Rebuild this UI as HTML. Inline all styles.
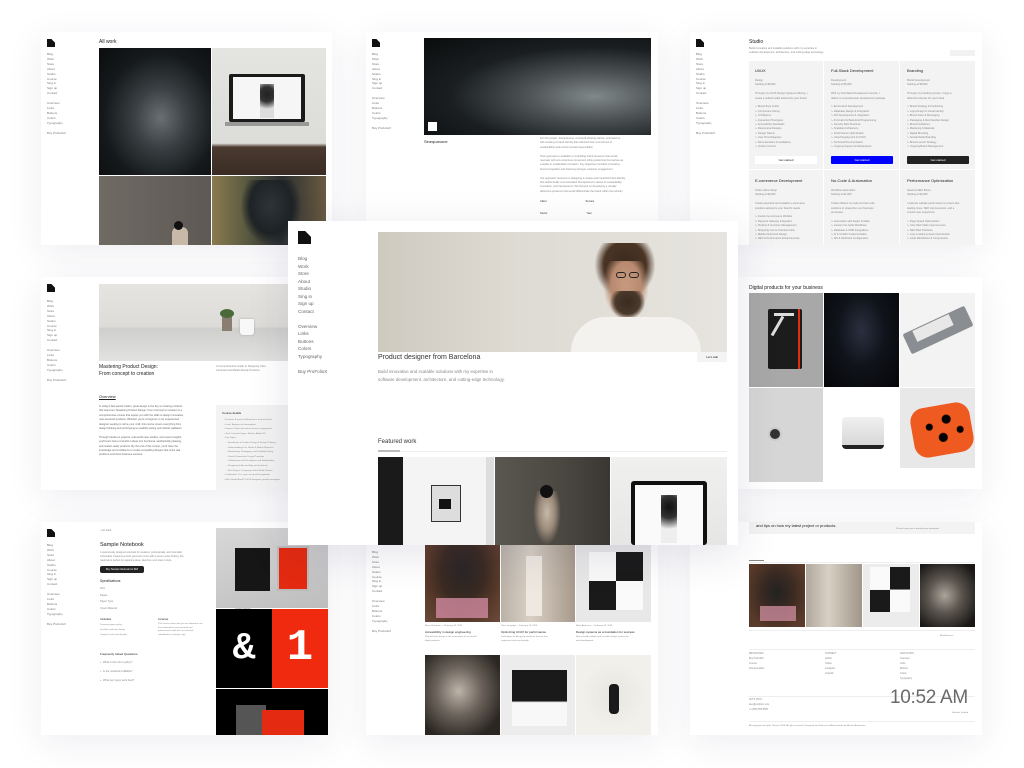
<!DOCTYPE html>
<html><head><meta charset="utf-8"><style>
*{margin:0;padding:0;box-sizing:border-box}
body{width:1024px;height:768px;background:#fff;position:relative;overflow:hidden;font-family:"Liberation Sans",sans-serif;color:#222}
.c{position:absolute;background:#fff;box-shadow:0 8px 34px rgba(40,40,90,.08);overflow:hidden}
.a{position:absolute}
.logo{position:absolute;background:#111;clip-path:polygon(0 0,55% 0,100% 45%,100% 100%,0 100%)}
.nav{position:absolute;font-size:3px;line-height:4.9px;color:#777;white-space:pre}
.t{position:absolute;white-space:pre;color:#888;font-size:2.6px;line-height:4.4px}
.h{position:absolute;white-space:nowrap;color:#222}
.g{position:absolute;background:#f3f3f3}
</style></head><body>

<!-- top-left: All work -->
<div class="c" style="left:41px;top:32px;width:291px;height:213px">
<div class="logo" style="left:6px;top:7px;width:8px;height:8px"></div>
<div class="nav" style="left:6px;top:20px">Blog
Work
Store
About
Studio
Course
Sing in
Sign up
Contact

Overview
Links
Buttons
Colors
Typography

Buy ProFolioX</div>
<div class="h" style="left:58px;top:7px;font-size:5px">All work</div>
<div class="a" style="left:58px;top:16px;width:112px;height:127px;background:radial-gradient(ellipse at 55% 55%,#6a7072 0,#3a4043 30%,#15191b 65%,#0b0d0e 100%)"></div>
<div class="a" style="left:171px;top:16px;width:114px;height:127px;background:linear-gradient(#e4e4e0 0,#dcdcd8 75%,#4a3a30 78%,#3a2c24 100%)"></div>
<div class="a" style="left:188px;top:42px;width:76px;height:48px;background:#1a1a1a;border-radius:2px"></div>
<div class="a" style="left:192px;top:45px;width:68px;height:42px;background:#f6f6f6"></div>
<div class="a" style="left:219px;top:52px;width:14px;height:34px;background:radial-gradient(circle at 50% 30%,#222 0,#333 30%,#ddd 60%)"></div>
<div class="a" style="left:184px;top:90px;width:84px;height:4px;background:#999"></div>
<div class="a" style="left:58px;top:144px;width:112px;height:69px;background:linear-gradient(90deg,#6f6a64,#5e5954)"></div>
<div class="a" style="left:131px;top:195px;width:16px;height:18px;background:#c8b8a8;border-radius:6px 6px 0 0"></div>
<div class="a" style="left:133px;top:189px;width:9px;height:9px;background:#111;border-radius:50%"></div>
<div class="a" style="left:171px;top:144px;width:114px;height:69px;background:linear-gradient(90deg,#8a7a50,#5a5a40 30%,#2a2e30 60%,#6a5a40)"></div>
<div class="a" style="left:200px;top:148px;width:60px;height:65px;background:radial-gradient(ellipse at 50% 40%,#2e3438 0,#1e2326 50%,rgba(0,0,0,0) 72%)"></div>
</div>

<!-- top-middle: Sinequanone -->
<div class="c" style="left:366px;top:32px;width:292px;height:190px">
<div class="logo" style="left:6px;top:7px;width:8px;height:8px"></div>
<div class="nav" style="left:6px;top:20px">Blog
Work
Store
About
Studio
Sing in
Sign up
Contact

Overview
Links
Buttons
Colors
Typography

Buy ProFolioX</div>
<div class="a" style="left:58px;top:6px;width:227px;height:97px;background:radial-gradient(ellipse at 75% 60%,#80888a 0,#4a5052 30%,#1a1e20 60%,#0a0c0d 100%)"></div>
<div class="a" style="left:62px;top:90px;width:9px;height:9px;background:#fff"></div>
<div class="h" style="left:58px;top:107px;font-size:4px">Sinequanone</div>
<div class="t" style="left:174px;top:105px">For this project, Sinequanone, a forward-thinking startup, entrusted us
with creating a brand identity that reflected their commitment to
sustainability and environmental responsibility.

Their goal was to establish a compelling brand presence that would
resonate with eco-conscious consumers while positioning themselves as
a leader in sustainable innovation. Key objectives included increasing
brand recognition and fostering stronger customer engagement.

Our approach centered on designing a unique and impactful brand identity
that authentically communicated Sinequanone's values of sustainability,
innovation, and transparency. We focused on developing a visually
distinctive presence that would differentiate the brand within the industry.</div>
<div class="t" style="left:174px;top:168px;color:#333">Client                                                      Service</div>
<div class="t" style="left:174px;top:180px;color:#333">Sector                                                      Year</div>
</div>

<!-- top-right: Studio -->
<div class="c" style="left:690px;top:32px;width:292px;height:213px">
<div class="logo" style="left:6px;top:7px;width:8px;height:8px"></div>
<div class="nav" style="left:6px;top:20px">Blog
Work
Store
About
Studio
Course
Sing in
Sign up
Contact

Overview
Links
Buttons
Colors
Typography

Buy ProFolioX</div>
<div class="h" style="left:59px;top:7px;font-size:5px">Studio</div>
<div class="t" style="left:59px;top:15px">Build innovative and scalable solutions with my expertise in
software development, architecture, and cutting-edge technology.</div>
<div class="a" style="left:260px;top:18px;width:25px;height:6px;background:#f2f2f2"></div>
<div class="g" style="left:59px;top:29px;width:74px;height:108px"></div>
<div class="g" style="left:134px;top:29px;width:75px;height:108px"></div>
<div class="g" style="left:210px;top:29px;width:75px;height:108px"></div>
<div class="g" style="left:59px;top:138px;width:74px;height:80px"></div>
<div class="g" style="left:134px;top:138px;width:75px;height:80px"></div>
<div class="g" style="left:210px;top:138px;width:75px;height:80px"></div>
<div class="h" style="left:65px;top:36px;font-size:4px">UI/UX</div>
<div class="h" style="left:141px;top:36px;font-size:4px">Full-Stack Development</div>
<div class="h" style="left:217px;top:36px;font-size:4px">Branding</div>
<div class="t" style="left:65px;top:47px">Design
Starting at $5,000

Through my UI/UX Design Systems offering, I
create a unified toolkit tailored for your brand.

↳ Brand Style Guide
↳ Component Library
↳ UI Patterns
↳ Interactive Prototypes
↳ Accessibility Standards
↳ Responsive Designs
↳ Design Tokens
↳ User Flow Diagrams
↳ Documentation &amp; Guidelines
↳ Version Control</div>
<div class="t" style="left:141px;top:47px">Development
Starting at $5,000

With my Full-Stack Development service, I
deliver a comprehensive development package.

↳ End-to-End Development
↳ Database Design &amp; Integration
↳ API Development &amp; Integration
↳ Front-End &amp; Back-End Programming
↳ Security Best Practices
↳ Scalable Architecture
↳ Performance Optimization
↳ Cloud Deployment &amp; CI/CD
↳ Technical Documentation
↳ Ongoing Support &amp; Maintenance</div>
<div class="t" style="left:217px;top:47px">Brand Development
Starting at $8,000

Through my branding service, I forge a
distinctive identity for your brand.

↳ Brand Strategy &amp; Positioning
↳ Logo Design &amp; Visual Identity
↳ Brand Voice &amp; Messaging
↳ Packaging &amp; Merchandise Design
↳ Brand Guidelines
↳ Marketing Collaterals
↳ Digital Branding
↳ Social Media Branding
↳ Brand Launch Strategy
↳ Ongoing Brand Management</div>
<div class="a" style="left:65px;top:124px;width:62px;height:8px;background:#fff;font-size:3px;text-align:center;line-height:8px">Get started</div>
<div class="a" style="left:141px;top:124px;width:62px;height:8px;background:#0000ff;color:#fff;font-size:3px;text-align:center;line-height:8px;border-radius:1px">Get started</div>
<div class="a" style="left:217px;top:124px;width:62px;height:8px;background:#222;color:#fff;font-size:3px;text-align:center;line-height:8px;border-radius:1px">Get started</div>
<div class="h" style="left:65px;top:146px;font-size:4px">E-commerce Development</div>
<div class="h" style="left:141px;top:146px;font-size:4px">No-Code &amp; Automation</div>
<div class="h" style="left:217px;top:146px;font-size:4px">Performance Optimization</div>
<div class="t" style="left:65px;top:157px">Online Store Setup
Starting at $6,000

Create seamless and scalable e-commerce
solutions tailored to your brand's needs.

↳ Custom E-commerce Website
↳ Payment Gateway Integration
↳ Product &amp; Inventory Management
↳ Shopping Cart &amp; Checkout Flow
↳ Mobile-Optimized Design
↳ SEO &amp; Performance Enhancements</div>
<div class="t" style="left:141px;top:157px">Workflow Automation
Starting at $4,000

Create efficient no-code and low-code
solutions to streamline your business
processes.

↳ Automation with Zapier &amp; Make
↳ Custom No-Code Workflows
↳ Database &amp; CRM Integrations
↳ AI &amp; Chatbot Implementation
↳ API &amp; Webhook Configuration</div>
<div class="t" style="left:217px;top:157px">Speed &amp; SEO Boost
Starting at $3,000

I optimize website performance to ensure fast
loading times, SEO improvements, and a
smooth user experience.

↳ Page Speed Optimization
↳ Core Web Vitals Improvements
↳ SEO Best Practices
↳ Lazy Loading &amp; Asset Optimization
↳ Code Minification &amp; Compression</div>
</div>

<!-- middle-left: course -->
<div class="c" style="left:41px;top:277px;width:290px;height:213px">
<div class="logo" style="left:6px;top:7px;width:8px;height:8px"></div>
<div class="nav" style="left:6px;top:22px">Blog
Work
Store
About
Studio
Course
Sing in
Sign up
Contact

Overview
Links
Buttons
Colors
Typography

Buy ProFolioX</div>
<div class="a" style="left:58px;top:7px;width:232px;height:77px;background:linear-gradient(#e6e4e0 0,#dedcd8 55%,#cfcfcd 58%,#e2e2e0 100%)"></div>
<div class="a" style="left:199px;top:42px;width:14px;height:16px;background:#f8f8f8;border-radius:0 0 3px 3px;box-shadow:0 0 2px #aaa"></div>
<div class="a" style="left:181px;top:40px;width:10px;height:14px;background:#8a7e70"></div>
<div class="a" style="left:179px;top:32px;width:14px;height:9px;background:#4a6a3a;border-radius:50%"></div>
<div class="h" style="left:58px;top:87px;font-size:5px;line-height:7px">Mastering Product Design:<br>From concept to creation</div>
<div class="t" style="left:175px;top:88px">A Comprehensive Guide to Designing User-
Centered and Market-Ready Products</div>
<div class="h" style="left:58px;top:117px;font-size:4px;text-decoration:underline">Overview</div>
<div class="t" style="left:58px;top:128px;color:#666">In today's fast-paced market, great design is the key to creating products
that stand out. Mastering Product Design: From Concept to Creation is a
comprehensive course that equips you with the skills to design innovative,
user-centered products. Whether you're a beginner or an experienced
designer seeking to refine your craft, this course covers everything from
design thinking and prototyping to usability testing and market validation.

Through hands-on projects, real-world case studies, and expert insights,
you'll learn how to transform ideas into functional, aesthetically pleasing,
and market-ready products. By the end of this course, you'll have the
knowledge and confidence to create compelling designs that solve real
problems and drive business success.</div>
<div class="g" style="left:175px;top:128px;width:115px;height:85px"></div>
<div class="h" style="left:181px;top:134px;font-size:3px">Course details</div>
<div class="t" style="left:183px;top:141px;font-size:2.2px;line-height:4.6px">• Duration: 8 weeks (Self-paced or Instructor-led)
• Level: Beginner to Intermediate
• Format: Online with video lectures, assignments
• Tools Covered: Figma, Sketch, Adobe XD
• Key Topics:
    ◦ Introduction to Product Design &amp; Design Thinking
    ◦ Understanding User Needs &amp; Market Research
    ◦ Wireframing, Prototyping, and Usability Testing
    ◦ Visual &amp; Interaction Design Principles
    ◦ Collaboration with Developers and Stakeholders
    ◦ Designing for Accessibility and Inclusivity
    ◦ Final Project: Designing a Real-World Product
• Certification: Yes, upon successful completion
• Who Should Enroll? UI/UX designers, product managers</div>
</div>

<!-- middle-right: products -->
<div class="c" style="left:738px;top:277px;width:244px;height:212px">
<div class="h" style="left:11px;top:8px;font-size:5px">Digital products for your business</div>
<div class="a" style="left:11px;top:16px;width:74px;height:94px;background:#a8a8a8"></div>
<div class="a" style="left:30px;top:32px;width:34px;height:60px;background:#1c1c1c;border-radius:2px"></div>
<div class="a" style="left:36px;top:36px;width:20px;height:3px;background:#ddd"></div>
<div class="a" style="left:38px;top:38px;width:3px;height:22px;background:#ddd;transform:rotate(30deg)"></div>
<div class="a" style="left:60px;top:32px;width:2px;height:60px;background:#e03010"></div>
<div class="a" style="left:86px;top:16px;width:75px;height:94px;background:radial-gradient(ellipse at 50% 40%,#2a3040 0,#10131a 45%,#050608 100%)"></div>
<div class="a" style="left:162px;top:16px;width:75px;height:94px;background:#f3f3f3"></div>
<div class="a" style="left:166px;top:42px;width:68px;height:22px;background:#8a8e92;transform:rotate(-25deg);border-radius:2px"></div>
<div class="a" style="left:175px;top:45px;width:40px;height:12px;background:#e8e8e8;transform:rotate(-25deg)"></div>
<div class="a" style="left:11px;top:111px;width:74px;height:94px;background:#d6d6d6"></div>
<div class="a" style="left:30px;top:150px;width:14px;height:14px;background:#333;border-radius:50%;border:2px solid #ccc"></div>
<div class="a" style="left:86px;top:111px;width:75px;height:94px;background:#fff"></div>
<div class="a" style="left:104px;top:140px;width:42px;height:32px;background:linear-gradient(#f0f0f0,#d8d8d8);border-radius:4px;border-bottom:4px solid #222"></div>
<div class="a" style="left:162px;top:111px;width:75px;height:80px;background:#e8e8e8"></div>
<div class="a" style="left:174px;top:128px;width:60px;height:50px;background:radial-gradient(circle at 30% 40%,#000 0 3px,transparent 4px),radial-gradient(circle at 60% 30%,#000 0 4px,transparent 5px),radial-gradient(circle at 50% 65%,#000 0 4px,transparent 5px),radial-gradient(circle at 80% 55%,#000 0 3px,transparent 4px),#ef5a20;border-radius:14px;transform:rotate(-10deg)"></div>
</div>

<!-- bottom-left: notebook -->
<div class="c" style="left:41px;top:522px;width:287px;height:213px">
<div class="logo" style="left:6px;top:7px;width:8px;height:8px"></div>
<div class="nav" style="left:6px;top:21px">Blog
Work
Store
About
Studio
Course
Sing in
Sign up
Contact

Overview
Links
Buttons
Colors
Typography

Buy ProFolioX</div>
<div class="t" style="left:59px;top:7px">‹ Go back</div>
<div class="h" style="left:59px;top:20px;font-size:5.5px">Sample Notebook</div>
<div class="t" style="left:59px;top:29px;font-size:2.4px;line-height:4px">A meticulously designed notebook for creatives, professionals, and minimalist
enthusiasts. Featuring a bold, geometric cover with a secure sewn binding, this
notebook is perfect for capturing ideas, sketches, and notes in style.</div>
<div class="a" style="left:59px;top:44px;width:44px;height:7px;background:#222;border-radius:2px;color:#fff;font-size:2.4px;line-height:7px;text-align:center">Buy Sample Notebook for $18</div>
<div class="h" style="left:59px;top:57px;font-size:3.3px">Specifications</div>
<div class="t" style="left:59px;top:64px;width:151px;line-height:6.7px">Size
Pages
Paper Type
Cover Material</div>
<div class="t" style="left:59px;top:64px;width:151px;line-height:6.7px;text-align:right">A5 (14.8 × 21 cm)
120
120 gsm, dotted
Vegan leather</div>
<div class="h" style="left:59px;top:95px;font-size:3px">Includes</div>
<div class="h" style="left:117px;top:95px;font-size:3px">License</div>
<div class="t" style="left:59px;top:101px;font-size:2.2px;line-height:4.8px">Premium paper quality
Durable hardcover design
Compact and travel-friendly</div>
<div class="t" style="left:117px;top:101px;font-size:2.2px;line-height:3.5px">This license states that you are allowed to use
this notebook for your personal and
professional needs but are restricted
redistribution or design copy.</div>
<div class="h" style="left:59px;top:130px;font-size:3px">Frequently Asked Questions</div>
<div class="t" style="left:59px;top:136px;line-height:9px">+  What is the return policy?
+  Is the notebook refillable?
+  What pen types work best?</div>
<div class="a" style="left:175px;top:6px;width:112px;height:80px;background:linear-gradient(160deg,#d8d8d8,#bdbdbd)"></div>
<div class="a" style="left:194px;top:26px;width:35px;height:43px;background:#161616"></div>
<div class="a" style="left:236px;top:24px;width:32px;height:45px;background:#e42a10;border:2px solid #bbb"></div>
<div class="a" style="left:175px;top:87px;width:56px;height:79px;background:#000;color:#fff;font:bold 38px/79px 'Liberation Mono',monospace;text-align:center">&amp;</div>
<div class="a" style="left:231px;top:87px;width:56px;height:79px;background:#f02a0e;color:#fff;font:bold 44px/79px 'Liberation Mono',monospace;text-align:center">1</div>
<div class="a" style="left:175px;top:167px;width:112px;height:46px;background:#000"></div>
<div class="a" style="left:195px;top:183px;width:30px;height:30px;background:#555"></div>
<div class="a" style="left:221px;top:188px;width:42px;height:25px;background:#e42a10"></div>
</div>

<!-- bottom-middle: blog -->
<div class="c" style="left:366px;top:522px;width:292px;height:213px">
<div class="nav" style="left:6px;top:28px">Blog
Work
Store
About
Studio
Course
Sing in
Sign up
Contact

Overview
Links
Buttons
Colors
Typography

Buy ProFolioX</div>
<div class="a" style="left:59px;top:23px;width:75px;height:77px;background:radial-gradient(ellipse at 50% 35%,#2a2626 0,#3a2a22 40%,#5a3a2a 70%,#6a4a3a);"></div>
<div class="a" style="left:70px;top:76px;width:52px;height:20px;background:#d08aa0;opacity:.8"></div>
<div class="a" style="left:135px;top:23px;width:74px;height:77px;background:linear-gradient(90deg,#bab2a8,#d8d0c4 40%,#a89a8c)"></div>
<div class="a" style="left:160px;top:34px;width:16px;height:60px;background:#eee8e0"></div>
<div class="a" style="left:210px;top:23px;width:75px;height:77px;background:#e8e8e8"></div>
<div class="a" style="left:223px;top:30px;width:54px;height:58px;background:linear-gradient(90deg,#fafafa 50%,#1a1a1a 50%) top/100% 50% no-repeat,linear-gradient(90deg,#1a1a1a 50%,#fafafa 50%) bottom/100% 50% no-repeat"></div>
<div class="t" style="left:59px;top:102px;font-size:2.2px">Elena Hartmann — February 26, 2026</div>
<div class="t" style="left:135px;top:102px;font-size:2.2px">Peter Longstep — February 25, 2026</div>
<div class="t" style="left:210px;top:102px;font-size:2.2px">Britta Anderson — February 24, 2026</div>
<div class="h" style="left:59px;top:108px;font-size:3px">Accessibility in design engineering</div>
<div class="h" style="left:135px;top:108px;font-size:3px">Optimizing UI/UX for performance</div>
<div class="h" style="left:210px;top:108px;font-size:3px">Design systems as a foundation for success</div>
<div class="t" style="left:59px;top:114px;font-size:2.2px;line-height:3.8px">Why inclusive design is the cornerstone of successful
digital products.</div>
<div class="t" style="left:135px;top:114px;font-size:2.2px;line-height:3.8px">Techniques for designing interfaces that are fast,
responsive and user-friendly.</div>
<div class="t" style="left:210px;top:114px;font-size:2.2px;line-height:3.8px">How to build scalable and reusable design systems for
web development.</div>
<div class="a" style="left:59px;top:133px;width:75px;height:80px;background:radial-gradient(ellipse at 45% 45%,#bcb4a8 0,#6a625a 40%,#2a2622 80%)"></div>
<div class="a" style="left:135px;top:133px;width:74px;height:80px;background:#ececec"></div>
<div class="a" style="left:146px;top:148px;width:55px;height:56px;background:linear-gradient(#1a1a1a 55%,#f8f8f8 58%)"></div>
<div class="a" style="left:210px;top:133px;width:75px;height:80px;background:radial-gradient(circle at 50% 50%,#e8e6e0 0,#f2f0ea 60%)"></div>
<div class="a" style="left:243px;top:162px;width:10px;height:30px;background:#1a1a1a;border-radius:4px"></div>
</div>

<!-- bottom-right: footer -->
<div class="c" style="left:690px;top:522px;width:292px;height:213px">
<div class="a" style="left:59px;top:0;width:226px;height:12px;background:#f3f3f3"></div>
<div class="h" style="left:66px;top:1px;font-size:4px">and tips on how my latest project or products.</div>
<div class="t" style="left:206px;top:5px;font-size:2px">We don't spam you or distribute your information.</div>
<div class="a" style="left:59px;top:40px;width:226px;height:1px;background:#eee"></div>
<div class="a" style="left:59px;top:38px;width:15px;height:1px;background:#888"></div>
<div class="a" style="left:59px;top:42px;width:56px;height:63px;background:radial-gradient(ellipse at 50% 45%,#222 0,#3a2a22 40%,#5a3a2a 80%)"></div>
<div class="a" style="left:70px;top:84px;width:36px;height:15px;background:#c88a9a;opacity:.8"></div>
<div class="a" style="left:116px;top:42px;width:56px;height:63px;background:linear-gradient(90deg,#b0a89c,#d8d0c4 40%,#a0968a)"></div>
<div class="a" style="left:173px;top:42px;width:56px;height:63px;background:#ececec"></div>
<div class="a" style="left:180px;top:45px;width:40px;height:45px;background:linear-gradient(90deg,#fafafa 50%,#1a1a1a 50%) top/100% 50% no-repeat,linear-gradient(90deg,#1a1a1a 50%,#fafafa 50%) bottom/100% 50% no-repeat"></div>
<div class="a" style="left:230px;top:42px;width:55px;height:63px;background:radial-gradient(ellipse at 45% 50%,#aaa49a 0,#5a544e 40%,#1a1816 85%)"></div>
<div class="a" style="left:59px;top:108px;width:226px;height:1px;background:#eee"></div>
<div class="t" style="left:250px;top:112px;font-size:2.2px">All reflections</div>
<div class="a" style="left:59px;top:127px;width:226px;height:1px;background:#eee"></div>
<div class="t" style="left:59px;top:130px;font-size:2.3px;line-height:4.9px">RESOURCES
Buy ProFolioX
License
Documentation</div>
<div class="t" style="left:135px;top:130px;font-size:2.3px;line-height:4.9px">CONNECT
Github
Twitter
Instagram
LinkedIn</div>
<div class="t" style="left:210px;top:130px;font-size:2.3px;line-height:4.9px">NAVIGATION
Overview
Links
Buttons
Colors
Typography</div>
<div class="a" style="left:59px;top:174px;width:226px;height:1px;background:#eee"></div>
<div class="t" style="left:59px;top:176px;font-size:2.3px;line-height:4.9px">LET'S CHAT
alex@profoliox.com
+1 (555) 555-5555</div>
<div class="h" style="left:200px;top:165px;font-size:19px;color:#6a6a6a;letter-spacing:-.3px">10:52 AM</div>
<div class="t" style="left:262px;top:189px;font-size:2.2px">Helsinki, Finland</div>
<div class="a" style="left:59px;top:199px;width:226px;height:1px;background:#eee"></div>
<div class="t" style="left:59px;top:202px;font-size:2.2px">All copyright and rights Themes 2026. All rights reserved. Designed and built on the Åland islands by Michael Andreuzza.</div>
</div>

<!-- central card -->
<div class="c" style="left:288px;top:221px;width:450px;height:324px;z-index:5;box-shadow:0 10px 40px rgba(40,40,90,.12)">
<div class="logo" style="left:10px;top:10px;width:13px;height:13px"></div>
<div class="nav" style="left:10px;top:34px;font-size:4.6px;line-height:7.5px;color:#666">Blog
Work
Store
About
Studio
Sing in
Sign up
Contact

Overview
Links
Buttons
Colors
Typography

Buy ProFolioX</div>
<div class="a" style="left:90px;top:11px;width:349px;height:120px;background:linear-gradient(90deg,#cfcac0 0,#dedbd3 40%,#e6e4de 100%)"></div>
<div class="a" style="left:307px;top:22px;width:60px;height:55px;background:radial-gradient(ellipse at 50% 40%,#3a2a1e 0,#4a3424 50%,rgba(80,55,40,0) 72%)"></div>
<div class="a" style="left:315px;top:40px;width:46px;height:60px;background:radial-gradient(ellipse at 50% 40%,#c89a80 0,#b88a70 45%,rgba(180,130,100,0) 70%)"></div>
<div class="a" style="left:322px;top:70px;width:35px;height:28px;background:radial-gradient(ellipse at 50% 40%,#3a2a20 0,#4a3a2c 50%,rgba(0,0,0,0) 72%)"></div>
<div class="a" style="left:328px;top:51px;width:10px;height:6px;border:1.5px solid #222;border-radius:3px"></div>
<div class="a" style="left:341px;top:51px;width:10px;height:6px;border:1.5px solid #222;border-radius:3px"></div>
<div class="a" style="left:283px;top:96px;width:130px;height:35px;background:#f4f2ee;border-radius:40px 40px 0 0"></div>
<div class="h" style="left:90px;top:133px;font-size:7px;color:#333">Product designer from Barcelona</div>
<div class="a" style="left:409px;top:131px;width:30px;height:10px;background:#f4f4f4;font-size:3px;line-height:10px;text-align:center">Let's talk</div>
<div class="t" style="left:90px;top:147px;font-size:4.4px;line-height:7.5px;color:#888">Build innovative and scalable solutions with my expertise in
software development, architecture, and cutting-edge technology.</div>
<div class="h" style="left:90px;top:218px;font-size:6px;color:#333">Featured work</div>
<div class="a" style="left:90px;top:230px;width:349px;height:1px;background:#eee"></div>
<div class="a" style="left:90px;top:229px;width:22px;height:2px;background:#bbb"></div>
<div class="a" style="left:90px;top:236px;width:116px;height:88px;background:linear-gradient(90deg,#1a1a1a 0 25px,#f4f4f4 25px 108px,#ddd 108px)"></div>
<div class="a" style="left:143px;top:264px;width:30px;height:37px;border:1.5px solid #333;background:#ddd"></div>
<div class="a" style="left:151px;top:278px;width:12px;height:10px;background:#111"></div>
<div class="a" style="left:207px;top:236px;width:115px;height:88px;background:linear-gradient(90deg,#5a5650,#4a4640 60%,#3a3632)"></div>
<div class="a" style="left:245px;top:270px;width:28px;height:54px;background:radial-gradient(ellipse at 50% 40%,#c8b8a8 0,#9a8a7a 40%,rgba(0,0,0,0) 70%)"></div>
<div class="a" style="left:252px;top:264px;width:13px;height:13px;background:#111;border-radius:50%"></div>
<div class="a" style="left:323px;top:236px;width:116px;height:88px;background:linear-gradient(#f0f0ee,#e6e6e4)"></div>
<div class="a" style="left:343px;top:260px;width:76px;height:64px;background:#111;border-radius:3px"></div>
<div class="a" style="left:347px;top:264px;width:68px;height:60px;background:#fafafa"></div>
<div class="a" style="left:373px;top:274px;width:16px;height:48px;background:radial-gradient(circle at 50% 25%,#111 0,#333 30%,#eee 60%)"></div>
</div>

</body></html>
